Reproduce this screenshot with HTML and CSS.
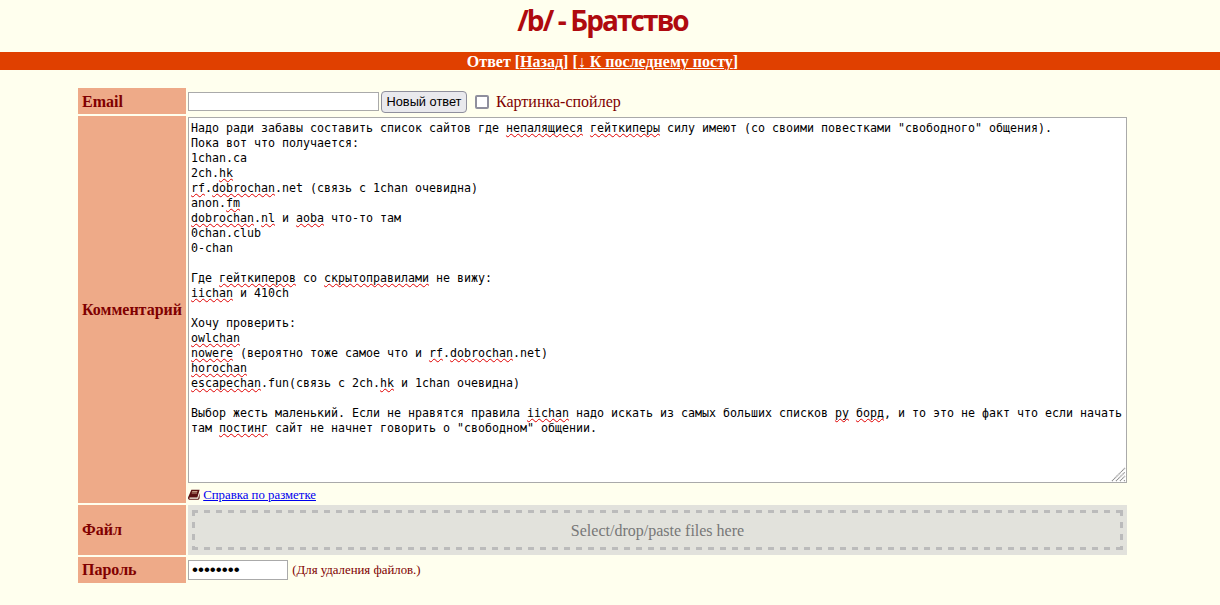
FILE: index.html
```html
<!DOCTYPE html>
<html lang="ru">
<head>
<meta charset="utf-8">
<title>/b/ - Братство</title>
<link rel="stylesheet" href="styles.css">
</head>
<body>
<header class="title"><h1>/b/ - Братство</h1></header>
<div class="bar">Ответ [<a href="#">Назад</a>] [<a href="#">↓ К последнему посту</a>]</div>
<form class="post-form">
<table class="form-table">
<tr class="row-email">
<th>Email</th>
<td class="email-cell"><input class="email-input" type="text"> <button class="submit" type="button">Новый ответ</button><label class="spoiler"><input type="checkbox"> Картинка-спойлер</label></td>
</tr>
<tr>
<th>Комментарий</th>
<td>
<div class="comment-wrap">
<div class="comment" role="textbox">Надо ради забавы составить список сайтов где <span class="sp">непалящиеся</span> <span class="sp">гейткиперы</span> силу имеют (со своими повестками "свободного" общения).
Пока вот что получается:
1chan.ca
2ch.<span class="sp">hk</span>
<span class="sp">rf</span>.<span class="sp">dobrochan</span>.net (связь с 1chan очевидна)
anon.<span class="sp">fm</span>
<span class="sp">dobrochan</span>.<span class="sp">nl</span> и <span class="sp">aoba</span> что-то там
0chan.club
0-chan

Где <span class="sp">гейткиперов</span> со <span class="sp">скрытоправилами</span> не вижу:
<span class="sp">iichan</span> и 410ch

Хочу проверить:
<span class="sp">owlchan</span>
<span class="sp">nowere</span> (вероятно тоже самое что и <span class="sp">rf</span>.<span class="sp">dobrochan</span>.net)
<span class="sp">horochan</span>
<span class="sp">escapechan</span>.fun(связь с 2ch.<span class="sp">hk</span> и 1chan очевидна)

Выбор жесть маленький. Если не нравятся правила <span class="sp">iichan</span> надо искать из самых больших списков <span class="sp">ру</span> <span class="sp">борд</span>, и то это не факт что если начать там <span class="sp">постинг</span> сайт не начнет говорить о "свободном" общении.</div>
<svg class="grip" viewBox="0 0 15 15" aria-hidden="true"><path d="M1 14L14 1M5 14L14 5M9 14L14 9M13 14L14 13" stroke="#8a8a8a" stroke-width="1.2" stroke-dasharray="1.1 .5" fill="none"/></svg>
</div>
<div class="help"><svg class="book" viewBox="0 0 16 14" aria-hidden="true"><path d="M4.5 0.5H15.5L12.5 11H3C2 11 1.6 11.6 1.8 12.1C2 12.6 2.5 12.8 3 12.8H13.5L15.5 5V12L14 14H2.5C1 14 0 13 0 11.5C0 11 .1 10.6 .3 10.2Z" fill="#5a1010"/><path d="M5.5 3H12.5M5 5H12" stroke="#e8c8a8" stroke-width="1"/></svg> <a href="#">Справка по разметке</a></div>
</td>
</tr>
<tr class="row-file">
<th>Файл</th>
<td class="file-cell"><div class="dropzone-wrap"><div class="dropzone">Select/drop/paste files here</div></div></td>
</tr>
<tr class="row-pass">
<th>Пароль</th>
<td><input class="pass-input" type="password" value="password"> <span class="hint">(Для удаления файлов.)</span></td>
</tr>
</table>
</form>
</body>
</html>
```
FILE: styles.css
```css
html, body { margin: 0; padding: 0; }
body {
  background: #ffffee;
  color: #800000;
  font-family: "Liberation Serif", "Times New Roman", serif;
  font-size: 13px;
  height: 605px;
  overflow: hidden;
}
.title { height: 52px; padding-right: 15px; box-sizing: border-box; }
.title h1 {
  margin: 0;
  padding-top: 5px;
  text-align: center;
  font-family: "Open Sans", Tahoma, sans-serif;
  font-size: 28px;
  line-height: 30px;
  font-weight: bold;
  letter-spacing: -1.9px;
  color: #af0a0f;
}
.bar {
  height: 18px;
  box-sizing: border-box;
  padding-right: 15px;
  line-height: 20px;
  background: #e04000;
  color: #fff;
  font-weight: bold;
  font-size: 16px;
  text-align: center;
  overflow: hidden;
}
.bar a { color: #fff; text-underline-offset: 1px; }
.post-form { display: flow-root; margin-top: 16px; }
.form-table {
  margin-left: 76px;
  width: 1053px;
  border-collapse: separate;
  border-spacing: 2px;
  table-layout: fixed;
}
.form-table th {
  width: 100px;
  padding: 1px 4px 0;
  background: #eeaa88;
  color: #800000;
  font-size: 16px;
  line-height: 18px;
  text-align: left;
  white-space: nowrap;
}
.form-table .row-file th, .form-table .row-pass th { padding-top: 0; }
.form-table td { padding: 0; vertical-align: middle; }
.row-email td { height: 26px; }
.email-cell { font-size: 16px; line-height: 22px; white-space: nowrap; }
.email-input {
  box-sizing: border-box;
  width: 191px;
  height: 19px;
  margin: 0;
  padding: 1px 2px;
  border: 1px solid #aaa;
  background: #fff;
  vertical-align: middle;
}
.submit {
  box-sizing: border-box;
  width: 86px;
  height: 22px;
  margin: 0 0 0 -2px;
  padding: 0;
  font-family: "Liberation Sans", Arial, sans-serif;
  font-size: 12.8px;
  color: #000;
  background: #e9e9ed;
  border: 1px solid #8f8f9d;
  border-radius: 4px;
  vertical-align: middle;
}
.spoiler { margin-left: 8px; vertical-align: middle; }
.spoiler input {
  appearance: none;
  box-sizing: border-box;
  margin: 0 3px 0 0;
  width: 14px;
  height: 14px;
  background: #fff;
  border: 2px solid #8f8f9d;
  border-radius: 2px;
  vertical-align: -2px;
}
.comment-wrap { position: relative; margin-top: 1px; }
.comment {
  box-sizing: border-box;
  width: 939px;
  height: 366px;
  padding: 3px 2px 2px 2px;
  border: 1px solid #aaa;
  background: #fff;
  color: #000;
  font-family: "DejaVu Sans Mono", monospace;
  font-size: 11.63px;
  line-height: 15px;
  white-space: pre-wrap;
}
.grip { position: absolute; right: 1px; bottom: 1px; width: 15px; height: 15px; pointer-events: none; }
.sp {
  text-decoration: underline wavy #e00000 1px;
  text-decoration-skip-ink: none;
  text-underline-offset: 1px;
}
.help {
  height: 20px;
  line-height: 24px;
  font-size: 12.8px;
  white-space: nowrap;
}
.help a { color: #0000ee; }
.book { width: 12px; height: 11px; vertical-align: -1px; }
.row-file td { height: 50px; }
.file-cell { background: #e2e2dc; }
.dropzone-wrap { padding: 5px 4px; box-sizing: border-box; height: 50px; }
.dropzone {
  box-sizing: border-box;
  height: 40px;
  line-height: 42px;
  background:
    repeating-linear-gradient(90deg, #bbb 0 6px, transparent 6px 12px) top / 100% 3px no-repeat,
    repeating-linear-gradient(90deg, #bbb 0 6px, transparent 6px 12px) bottom / 100% 3px no-repeat,
    repeating-linear-gradient(180deg, #bbb 0 6px, transparent 6px 12px) left / 3px 100% no-repeat,
    repeating-linear-gradient(180deg, #bbb 0 6px, transparent 6px 12px) right / 3px 100% no-repeat;
  color: #777;
  font-size: 16px;
  text-align: center;
}
.row-pass td { height: 24px; padding-bottom: 2px; line-height: 20px; }
.pass-input {
  box-sizing: border-box;
  width: 100px;
  height: 20px;
  margin: 0;
  padding: 0 3px;
  border: 1px solid #aaa;
  background: #fff;
  color: #000;
  font-family: "Liberation Sans", sans-serif;
  font-size: 17px;
  vertical-align: middle;
}
.hint { font-size: 12.8px; margin-left: 1px; vertical-align: middle; }
```
